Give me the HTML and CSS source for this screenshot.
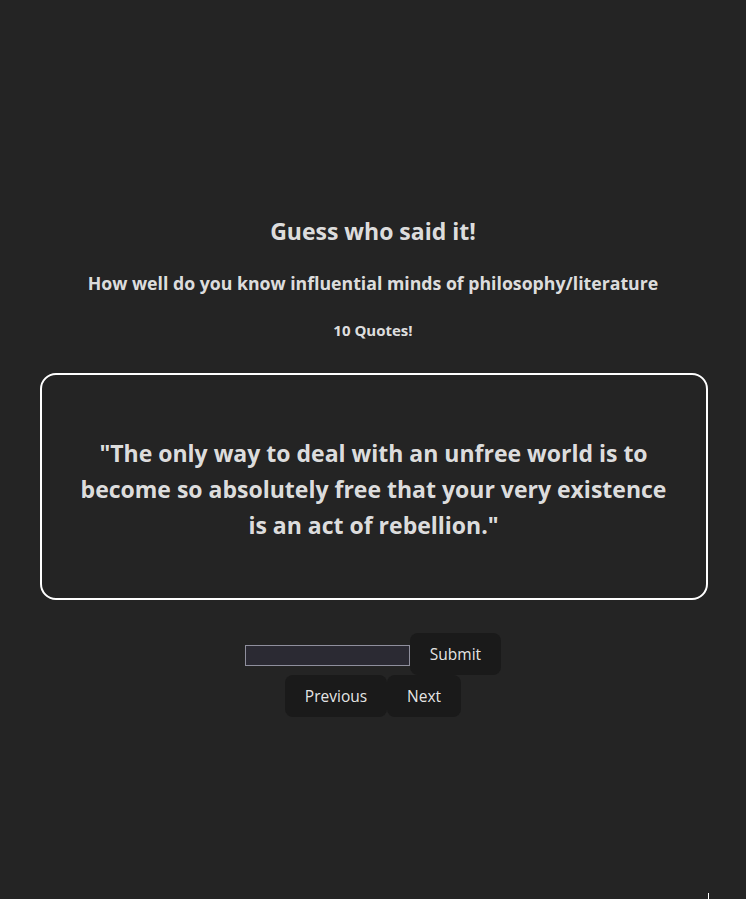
FILE: index.html
```html
<!DOCTYPE html>
<html lang="en">
<head>
<meta charset="utf-8">
<title>Guess who said it!</title>
<link rel="stylesheet" href="styles.css">
</head>
<body>
<main class="app">
  <h1 class="title">Guess who said it!</h1>
  <h2 class="subtitle">How well do you know influential minds of philosophy/literature</h2>
  <h3 class="count">10 Quotes!</h3>
  <section class="card">
    <p class="quote">"The only way to deal with an unfree world is to become so absolutely free that your very existence is an act of rebellion."</p>
  </section>
  <form class="answer" onsubmit="return false">
    <input class="answer-input" type="text" aria-label="Your guess">
    <button class="btn" type="submit">Submit</button>
  </form>
  <div class="nav">
    <button class="btn" type="button">Previous</button>
    <button class="btn" type="button">Next</button>
  </div>
</main>
<div class="tick"></div>
</body>
</html>
```
FILE: styles.css
```css
html, body {
  margin: 0;
  padding: 0;
}
body {
  background: #242424;
  color: rgba(255, 255, 255, 0.87);
  font-family: "Open Sans", "Noto Sans", sans-serif;
  min-height: 899px;
  position: relative;
  overflow: hidden;
}
.app {
  display: flex;
  flex-direction: column;
  align-items: center;
  padding-top: 213px;
}
.title {
  margin: 0;
  font-size: 23px;
  font-weight: 700;
  line-height: 36px;
}
.subtitle {
  margin: 16px 0 0;
  font-size: 17.7px;
  font-weight: 700;
  line-height: 36px;
}
.count {
  margin: 18px 0 0;
  font-size: 15px;
  font-weight: 700;
  line-height: 22px;
}
.card {
  box-sizing: border-box;
  width: 668px;
  height: 227px;
  margin: 32px 0 0 1px;
  border: 2px solid #fff;
  border-radius: 16px;
  display: flex;
  align-items: center;
  justify-content: center;
  padding: 4px 20px 0;
}
.quote {
  margin: 0;
  text-align: center;
  font-size: 23px;
  font-weight: 700;
  line-height: 36px;
  max-width: 600px;
}
.answer {
  display: flex;
  align-items: center;
  margin-top: 33px;
}
.answer-input {
  box-sizing: border-box;
  width: 165px;
  height: 21px;
  margin-top: 2px;
  background: #2b2a33;
  border: 1px solid #8f8f9d;
  color: #fbfbfe;
  padding: 1px 4px;
  font: 13px "Open Sans", sans-serif;
}
.nav {
  display: flex;
}
.btn {
  box-sizing: border-box;
  height: 42px;
  border-radius: 8px;
  border: 1px solid transparent;
  padding: 0 19px;
  background: #1a1a1a;
  color: rgba(255, 255, 255, 0.9);
  font-family: "Open Sans", "Noto Sans", sans-serif;
  font-size: 15.5px;
  font-weight: 500;
  cursor: pointer;
}
.tick {
  position: absolute;
  left: 708px;
  top: 893px;
  width: 1px;
  height: 6px;
  background: #fff;
}
```
